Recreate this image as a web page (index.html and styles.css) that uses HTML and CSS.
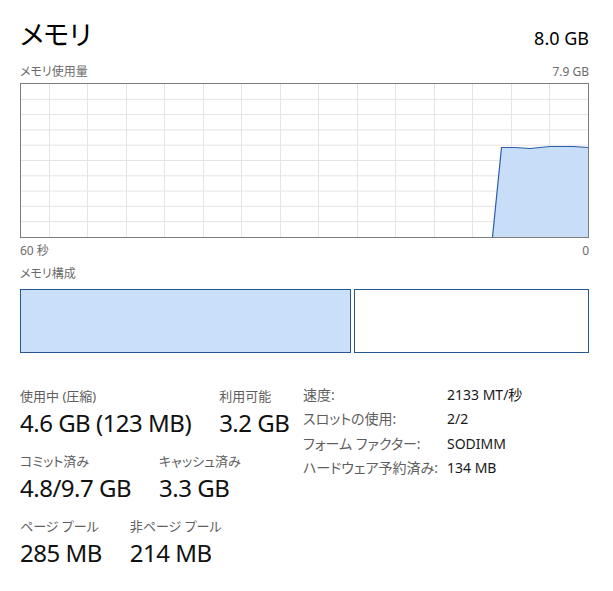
FILE: index.html
```html
<!DOCTYPE html>
<html lang="ja">

<head>
    <meta charset="UTF-8">
    <meta name="viewport" content="width=device-width, initial-scale=1.0">
    <title>メモリ</title>
    <link rel="stylesheet" href="styles.css">
</head>

<body>
    <div class="header">
        <h1 class="title">メモリ</h1>
        <div class="total">8.0 GB</div>
    </div>

    <div class="caption caption-top">
        <span>メモリ使用量</span>
        <span>7.9 GB</span>
    </div>

    <div class="graph">
        <svg width="567" height="153" viewBox="0 0 567 153">
            <g class="grid">
                <line x1="0" y1="15.3" x2="567" y2="15.3" />
                <line x1="0" y1="30.6" x2="567" y2="30.6" />
                <line x1="0" y1="45.9" x2="567" y2="45.9" />
                <line x1="0" y1="61.2" x2="567" y2="61.2" />
                <line x1="0" y1="76.5" x2="567" y2="76.5" />
                <line x1="0" y1="91.8" x2="567" y2="91.8" />
                <line x1="0" y1="107.1" x2="567" y2="107.1" />
                <line x1="0" y1="122.4" x2="567" y2="122.4" />
                <line x1="0" y1="137.7" x2="567" y2="137.7" />
                <line x1="28.5" y1="0" x2="28.5" y2="153" />
                <line x1="66.5" y1="0" x2="66.5" y2="153" />
                <line x1="105.5" y1="0" x2="105.5" y2="153" />
                <line x1="143.5" y1="0" x2="143.5" y2="153" />
                <line x1="182.5" y1="0" x2="182.5" y2="153" />
                <line x1="220.5" y1="0" x2="220.5" y2="153" />
                <line x1="259.5" y1="0" x2="259.5" y2="153" />
                <line x1="297.5" y1="0" x2="297.5" y2="153" />
                <line x1="336.5" y1="0" x2="336.5" y2="153" />
                <line x1="374.5" y1="0" x2="374.5" y2="153" />
                <line x1="413.5" y1="0" x2="413.5" y2="153" />
                <line x1="451.5" y1="0" x2="451.5" y2="153" />
                <line x1="490.5" y1="0" x2="490.5" y2="153" />
                <line x1="528.5" y1="0" x2="528.5" y2="153" />
            </g>
            <!-- usage history, last ~12 seconds -->
            <polygon class="usage-fill" points="471.5,153 480.5,63.5 494,63.5 509,64.5 529,62.5 552,62.5 567,63.5 567,153" />
            <polyline class="usage-line" points="471.5,153 480.5,63.5 494,63.5 509,64.5 529,62.5 552,62.5 567,63.5" />
        </svg>
    </div>

    <div class="caption caption-axis">
        <span>60 秒</span>
        <span>0</span>
    </div>

    <div class="caption caption-comp">
        <span>メモリ構成</span>
    </div>

    <div class="composition">
        <div class="segment segment-used"></div>
        <div class="segment segment-free"></div>
    </div>

    <div class="stats">
        <div class="stats-left">
            <div class="stat-row">
                <div class="stat">
                    <div class="stat-label">使用中 (圧縮)</div>
                    <div class="stat-value">4.6 GB (123 MB)</div>
                </div>
                <div class="stat">
                    <div class="stat-label">利用可能</div>
                    <div class="stat-value">3.2 GB</div>
                </div>
            </div>
            <div class="stat-row">
                <div class="stat">
                    <div class="stat-label">コミット済み</div>
                    <div class="stat-value">4.8/9.7 GB</div>
                </div>
                <div class="stat">
                    <div class="stat-label">キャッシュ済み</div>
                    <div class="stat-value">3.3 GB</div>
                </div>
            </div>
            <div class="stat-row">
                <div class="stat">
                    <div class="stat-label">ページ プール</div>
                    <div class="stat-value">285 MB</div>
                </div>
                <div class="stat">
                    <div class="stat-label">非ページ プール</div>
                    <div class="stat-value">214 MB</div>
                </div>
            </div>
        </div>

        <dl class="details">
            <dt>速度:</dt>
            <dd>2133 MT/秒</dd>
            <dt>スロットの使用:</dt>
            <dd>2/2</dd>
            <dt>フォーム ファクター:</dt>
            <dd>SODIMM</dd>
            <dt>ハードウェア予約済み:</dt>
            <dd>134 MB</dd>
        </dl>
    </div>
</body>

</html>
```

FILE: styles.css
```css
body {
    margin: 0;
    padding: 17px 24px 0 20px;
    background-color: #ffffff;
    color: #000000;
    font-family: "Noto Sans", "Noto Sans CJK JP", sans-serif;
    font-feature-settings: "palt";
}

.header {
    display: flex;
    justify-content: space-between;
    align-items: baseline;
    height: 36px;
}

.title {
    margin: 0;
    font-size: 27px;
    font-weight: normal;
    line-height: 36px;
}

.total {
    font-size: 18px;
    line-height: 24px;
}

.caption {
    display: flex;
    justify-content: space-between;
    font-size: 12px;
    line-height: 16px;
    color: #6b6b6b;
}

.caption-top {
    margin-top: 11px;
}

.caption-axis {
    margin-top: 5px;
}

.caption-comp {
    margin-top: 7px;
}

.graph {
    margin-top: 3px;
    border: 1px solid #7c7c7c;
    height: 153px;
}

.graph svg {
    display: block;
}

.grid line {
    stroke: #e4e4e4;
    stroke-width: 1;
}

.usage-fill {
    fill: #c8ddf8;
}

.usage-line {
    fill: none;
    stroke: #2a5ea8;
    stroke-width: 1.2;
}

.composition {
    display: flex;
    gap: 3px;
    margin-top: 7px;
    height: 64px;
}

.segment {
    border: 1px solid #24588f;
    box-sizing: border-box;
}

.segment-used {
    width: 331px;
    background-color: #c9dffa;
}

.segment-free {
    flex: 1;
    background-color: #ffffff;
}

.stats {
    display: flex;
    align-items: flex-start;
    margin-top: 30px;
}

.stats-left {
    width: 283px;
    padding-top: 4px;
}

.stat-row {
    display: flex;
    gap: 28px;
}

.stat-row + .stat-row {
    margin-top: 14px;
}

.stat-label {
    font-size: 13px;
    line-height: 18px;
    color: #5e5e5e;
}

.stat-value {
    margin-top: 3px;
    font-size: 24px;
    line-height: 30px;
    letter-spacing: -0.5px;
    color: #111111;
}

.details {
    display: grid;
    grid-template-columns: 144px auto;
    margin: 0;
    font-size: 14px;
    line-height: 24.4px;
}

.details dt {
    color: #5e5e5e;
}

.details dd {
    margin: 0;
    color: #1a1a1a;
}
```
